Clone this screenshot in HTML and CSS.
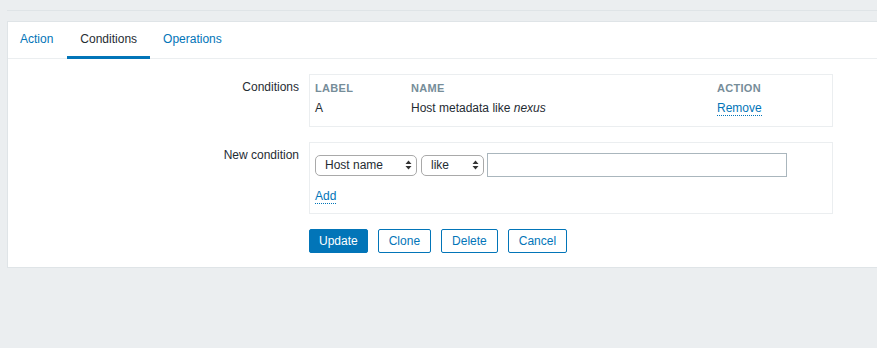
FILE: index.html
```html
<!DOCTYPE html>
<html lang="en">
<head>
    <meta charset="UTF-8">
    <title>Actions</title>
    <link rel="stylesheet" href="styles.css">
</head>
<body>
    <div class="page-header"></div>

    <div class="panel">
        <ul class="tabs">
            <li><a href="#">Action</a></li>
            <li class="active"><a href="#">Conditions</a></li>
            <li><a href="#">Operations</a></li>
        </ul>

        <div class="form">
            <label class="form-label">Conditions</label>
            <div class="field-box conditions">
                <table>
                    <thead>
                        <tr>
                            <th class="col-label">Label</th>
                            <th class="col-name">Name</th>
                            <th>Action</th>
                        </tr>
                    </thead>
                    <tbody>
                        <tr>
                            <td>A</td>
                            <td>Host metadata like <em>nexus</em></td>
                            <td><a class="link" href="#">Remove</a></td>
                        </tr>
                    </tbody>
                </table>
            </div>

            <label class="form-label">New condition</label>
            <div class="field-box new-condition">
                <div class="controls">
                    <div class="select select-type">
                        <span>Host name</span>
                        <svg width="7" height="10" viewBox="0 0 7 10"><path d="M3.5 0.5 L6.5 4 H0.5 Z M3.5 9.5 L6.5 6 H0.5 Z" fill="#333"/></svg>
                    </div>
                    <div class="select select-op">
                        <span>like</span>
                        <svg width="7" height="10" viewBox="0 0 7 10"><path d="M3.5 0.5 L6.5 4 H0.5 Z M3.5 9.5 L6.5 6 H0.5 Z" fill="#333"/></svg>
                    </div>
                    <input type="text" class="text-field">
                </div>
                <a class="link add" href="#">Add</a>
            </div>

            <div></div>
            <div class="buttons">
                <button class="btn primary">Update</button>
                <button class="btn">Clone</button>
                <button class="btn">Delete</button>
                <button class="btn">Cancel</button>
            </div>
        </div>
    </div>
</body>
</html>
```

FILE: styles.css
```css
:root {
    --bg: #ebeef0;
    --line: #dfe4e7;
    --text: #1f2c33;
    --link: #0275b8;
    --muted: #768d99;
}

* {
    margin: 0;
    padding: 0;
    box-sizing: border-box;
}

body {
    font-family: "Liberation Sans", Arial, sans-serif;
    font-size: 12px;
    color: var(--text);
    background: var(--bg);
    overflow: hidden;
}

.page-header {
    height: 11px;
    margin-left: 7px;
    border-bottom: 1px solid var(--line);
    margin-bottom: 10px;
}

.panel {
    margin-left: 7px;
    background: #fff;
    border: 1px solid var(--line);
    border-right: none;
    height: 247px;
}

.tabs {
    list-style: none;
    display: flex;
    border-bottom: 1px solid var(--bg);
    height: 37px;
}

.tabs li {
    margin-bottom: -1px;
}

.tabs a {
    display: block;
    height: 37px;
    line-height: 34px;
    padding: 0 13px;
    color: var(--link);
    text-decoration: none;
    border-bottom: 3px solid transparent;
}

.tabs li:first-child a {
    padding: 0 14px 0 12px;
}

.tabs .active a {
    color: var(--text);
    border-bottom-color: var(--link);
}

.form {
    display: grid;
    grid-template-columns: 291px 524px;
    column-gap: 10px;
    row-gap: 15px;
    padding-top: 15px;
}

.form-label {
    text-align: right;
    padding-top: 6px;
}

.field-box {
    border: 1px solid var(--bg);
}

.conditions {
    padding: 3px 5px 8px;
}

table {
    border-collapse: collapse;
    width: 100%;
}

th {
    text-align: left;
    text-transform: uppercase;
    font-size: 11px;
    font-weight: bold;
    color: var(--muted);
    letter-spacing: 0.3px;
    line-height: 20px;
}

td {
    line-height: 20px;
}

.col-label {
    width: 96px;
}

.col-name {
    width: 306px;
}

.link {
    color: var(--link);
    text-decoration: none;
    border-bottom: 1px dotted var(--link);
}

.new-condition {
    padding: 10px 5px 9px;
}

.controls {
    display: flex;
    align-items: center;
    height: 24px;
}

.select {
    display: flex;
    align-items: center;
    justify-content: space-between;
    height: 21px;
    border: 1px solid #a9a9a9;
    border-radius: 5px;
    padding: 0 4px 0 9px;
    background: #fff;
    margin-right: 4px;
}

.select-type {
    width: 102px;
}

.select-op {
    width: 63px;
    margin-right: 3px;
}

.text-field {
    width: 300px;
    height: 24px;
    border: 1px solid #aab6bd;
    outline: none;
}

.add {
    display: inline-block;
    margin-top: 12px;
    line-height: 14px;
}

.buttons {
    display: flex;
    gap: 10px;
}

.btn {
    font-family: inherit;
    font-size: 12px;
    height: 24px;
    padding: 0 10px;
    border: 1px solid var(--link);
    border-radius: 2px;
    background: #fff;
    color: var(--link);
    cursor: pointer;
}

.btn.primary {
    padding: 0 9px;
    background: var(--link);
    color: #fff;
}
```
